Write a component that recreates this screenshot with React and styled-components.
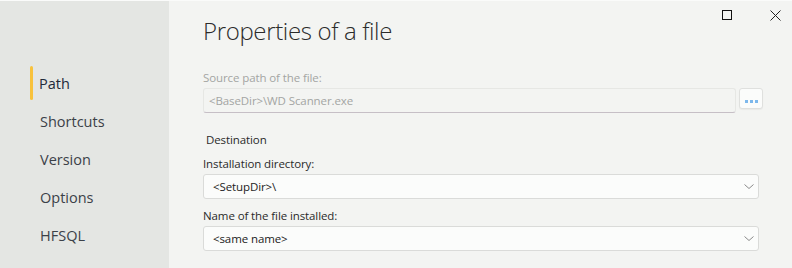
import React from "react";
import styled, { createGlobalStyle } from "styled-components";

const Global = createGlobalStyle`
  html, body { margin: 0; padding: 0; background: #f3f4f2; }
  body { font-family: "Open Sans", "Noto Sans", sans-serif; }
  * { box-sizing: border-box; }
`;

const Window = styled.div`
  width: 792px;
  height: 268px;
  display: flex;
  overflow: hidden;
  border-top: 1px solid #fafbfa;
  background: #f3f4f2;
  position: relative;
`;

const Sidebar = styled.nav`
  width: 169px;
  flex: none;
  background: #e4e6e3;
  padding-top: 63px;
  display: flex;
  flex-direction: column;
`;

const NavItem = styled.div`
  position: relative;
  height: 38px;
  display: flex;
  align-items: center;
  padding-left: ${(p) => (p.$active ? "39px" : "40px")};
  font-size: 14.5px;
  color: ${(p) => (p.$active ? "#1f2a3a" : "#3b4148")};
  &::before {
    content: "";
    display: ${(p) => (p.$active ? "block" : "none")};
    position: absolute;
    left: 30px;
    top: 2px;
    width: 3px;
    height: 34px;
    border-radius: 2px;
    background: #f8c23c;
  }
`;

const Main = styled.main`
  flex: 1;
  display: flex;
  flex-direction: column;
  padding: 13px 29px 0 34px;
`;

const Title = styled.h1`
  margin: 0;
  font-size: 24px;
  font-weight: 300;
  line-height: 34px;
  color: #2b2b2b;
  letter-spacing: -0.35px;
`;

const Label = styled.div`
  font-size: 11.5px;
  line-height: 16px;
  letter-spacing: -0.1px;
  color: ${(p) => (p.$disabled ? "#a3a5a3" : "#2a2a2a")};
  margin-top: ${(p) => p.$mt || 0}px;
  margin-left: ${(p) => p.$ml || 0}px;
`;

const Row = styled.div`
  display: flex;
  align-items: flex-start;
  gap: 3px;
  margin-top: 2px;
`;

const Input = styled.div`
  flex: 1;
  height: 25px;
  border: 1px solid #e6e7e4;
  border-bottom-color: #c6bfc6;
  border-radius: 3px;
  background: #f3f4f2;
  color: #a3a5a3;
  font-size: 11.5px;
  letter-spacing: -0.1px;
  display: flex;
  align-items: center;
  padding-left: 5px;
`;

const DotsButton = styled.button`
  width: 24px;
  height: 21px;
  border: 1px solid #dfe0de;
  border-radius: 3px;
  background: #fbfcfb;
  display: flex;
  align-items: flex-end;
  justify-content: center;
  padding: 0 0 5px;
  gap: 2px;
  box-shadow: 0 1px 1px rgba(0, 0, 0, 0.04);
`;

const Dot = styled.span`
  width: 3px;
  height: 3px;
  background: #7db8ec;
`;

const Select = styled.div`
  height: 25px;
  margin-top: 2px;
  width: 556px;
  border: 1px solid #dadbd9;
  border-radius: 3px;
  background: #fbfcfb;
  color: #222;
  font-size: 11.5px;
  letter-spacing: -0.1px;
  display: flex;
  align-items: center;
  justify-content: space-between;
  padding: 0 4px 0 9px;
`;

const Controls = styled.div`
  position: absolute;
  top: 9px;
  right: 11px;
  display: flex;
  align-items: center;
  gap: 37px;
`;

const Chevron = () => (
  <svg width="10" height="6" viewBox="0 0 10 6">
    <path d="M0.5 0.5 L5 4.5 L9.5 0.5" fill="none" stroke="#8a8a8a" strokeWidth="1" />
  </svg>
);

export default function App() {
  return (
    <>
      <Global />
      <Window>
        <Sidebar>
          <NavItem $active>Path</NavItem>
          <NavItem>Shortcuts</NavItem>
          <NavItem>Version</NavItem>
          <NavItem>Options</NavItem>
          <NavItem>HFSQL</NavItem>
        </Sidebar>
        <Main>
          <Title>Properties of a file</Title>
          <Label $disabled $mt={22}>Source path of the file:</Label>
          <Row>
            <Input>&lt;BaseDir&gt;\WD Scanner.exe</Input>
            <DotsButton aria-label="browse">
              <Dot />
              <Dot />
              <Dot />
            </DotsButton>
          </Row>
          <Label $mt={19} $ml={3}>Destination</Label>
          <Label $mt={8}>Installation directory:</Label>
          <Select>
            &lt;SetupDir&gt;\
            <Chevron />
          </Select>
          <Label $mt={9}>Name of the file installed:</Label>
          <Select>
            &lt;same name&gt;
            <Chevron />
          </Select>
        </Main>
        <Controls>
          <svg width="11" height="11" viewBox="0 0 11 11">
            <rect x="0.5" y="0.5" width="9" height="9" fill="none" stroke="#111" strokeWidth="1" />
          </svg>
          <svg width="11" height="11" viewBox="0 0 11 11">
            <path d="M0.5 0.5 L10.5 10.5 M10.5 0.5 L0.5 10.5" stroke="#222" strokeWidth="1" />
          </svg>
        </Controls>
      </Window>
    </>
  );
}
